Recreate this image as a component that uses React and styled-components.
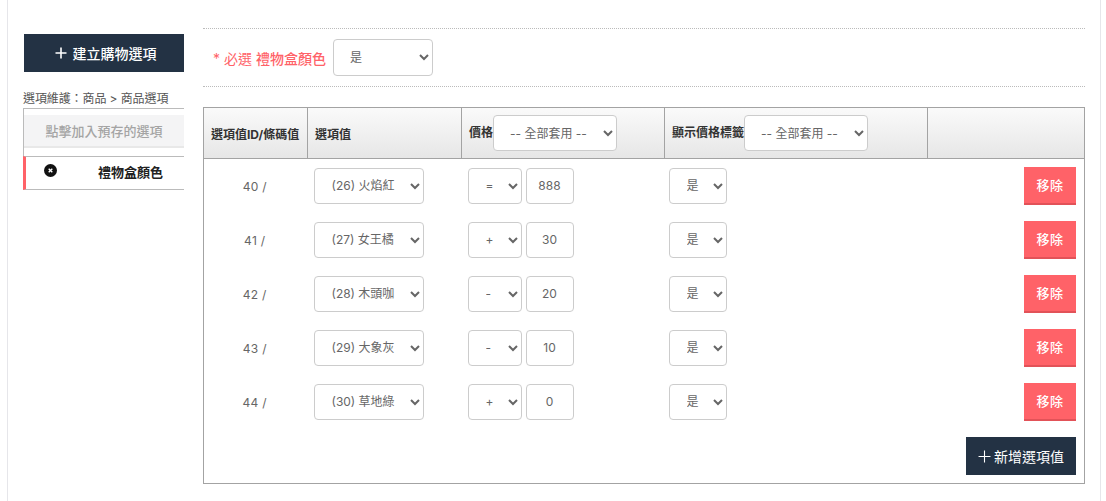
import React from "react";
import styled, { createGlobalStyle } from "styled-components";

const options = [
  { id: 40, value: "(26) 火焰紅", sign: "=", price: "888" },
  { id: 41, value: "(27) 女王橘", sign: "+", price: "30" },
  { id: 42, value: "(28) 木頭咖", sign: "-", price: "20" },
  { id: 43, value: "(29) 大象灰", sign: "-", price: "10" },
  { id: 44, value: "(30) 草地綠", sign: "+", price: "0" }
];

const GlobalStyle = createGlobalStyle`
  html, body {
    margin: 0;
    height: 501px;
    overflow: hidden;
    background: #fff;
    font-family: Inter, "Noto Sans CJK TC", sans-serif;
    color: #555;
  }
`;

const Panel = styled.div`
  box-sizing: border-box;
  width: 1094px;
  height: 501px;
  margin-left: 7px;
  padding: 28px 15px 0 16px;
  border-left: 1px solid #e6e6ea;
  border-right: 1px solid #e6e6ea;
  display: flex;
  gap: 19px;
`;

const Sidebar = styled.aside`
  width: 160px;
  flex: none;
  padding-top: 6px;
`;

const DarkButton = styled.button`
  box-sizing: border-box;
  border: 0;
  background: #233244;
  color: #fff;
  font: 500 14px Inter, "Noto Sans CJK TC", sans-serif;
  display: flex;
  align-items: center;
  justify-content: center;
  gap: 6px;
  height: 38px;
  padding: 0;
`;

const CreateButton = styled(DarkButton)`
  width: 160px;
  padding-left: 3px;
`;

const Crumb = styled.div`
  margin: 18px 0 0 -1px;
  height: 18px;
  line-height: 18px;
  font-size: 12px;
  letter-spacing: -0.1px;
  color: #555;
  white-space: nowrap;
`;

const OptionList = styled.div`
  box-sizing: border-box;
  width: 161px;
  height: 82px;
  margin-left: -1px;
  padding-top: 6px;
  border-top: 1px solid #bbb;
  border-left: 1px solid #bbb;
`;

const Preset = styled.div`
  box-sizing: border-box;
  height: 33px;
  line-height: 33px;
  background: #f4f4f5;
  border-bottom: 2px solid #e8e8e8;
  color: #a4a4a4;
  font-size: 13px;
  font-weight: 500;
  text-align: center;
`;

const PickedOption = styled.div`
  box-sizing: border-box;
  height: 34px;
  margin: 8px 0 0 -1px;
  border-top: 1px solid #bbb;
  border-bottom: 1px solid #bbb;
  border-left: 3px solid #ff6268;
  display: flex;
  padding: 7px 0 0 18px;
  color: #222;
  font-size: 13px;
  font-weight: 700;
`;

const PickedName = styled.span`
  margin: -1px 0 0 41px;
  line-height: 18px;
`;

const Main = styled.main`
  flex: 1;
  min-width: 0;
`;

const RequiredRow = styled.div`
  box-sizing: border-box;
  height: 59px;
  border-top: 1px dotted #bbb;
  border-bottom: 1px dotted #bbb;
  display: flex;
  align-items: center;
  gap: 7px;
  padding-left: 10px;
`;

const RequiredLabel = styled.label`
  color: #ff6268;
  font-size: 14px;
  font-weight: 400;
  white-space: nowrap;
`;

const Strong = styled.b`
  font-weight: 500;
`;

const Select = styled.select`
  box-sizing: border-box;
  flex: none;
  width: ${(p) => p.$w}px;
  height: ${(p) => p.$h || 36}px;
  padding: 0 0 0 ${(p) => p.$pad ?? 13}px;
  background-color: #fff;
  border: 1px solid #ccc;
  border-radius: 4px;
  color: #666;
  font: 400 12px Inter, "Noto Sans CJK TC", sans-serif;
`;

const Table = styled.table`
  box-sizing: border-box;
  margin-top: 20px;
  width: 882px;
  height: 377px;
  table-layout: fixed;
  border-collapse: collapse;
  border: 1px solid #a3a3a3;
`;

const HeadRow = styled.tr`
  height: 51px;
  background: linear-gradient(#fafafa, #e6e6e6);
`;

const Th = styled.th`
  box-sizing: border-box;
  width: ${(p) => p.$w}px;
  border: 1px solid #a3a3a3;
  padding: 0 ${(p) => p.$pad ?? 7}px;
  text-align: left;
  color: #333;
  font-size: 12px;
  font-weight: 700;
  white-space: nowrap;
  overflow: hidden;
`;

const ThInner = styled.div`
  display: flex;
  align-items: center;
`;

const ThLabel = styled.span`
  position: relative;
  top: -2px;
`;

const Row = styled.tr`
  height: 54px;
`;

const Td = styled.td`
  padding: 0 ${(p) => p.$pad ?? 6}px;
  vertical-align: middle;
  font-size: 12px;
  color: #666;
  text-align: ${(p) => p.$align || "left"};
`;

const IdCell = styled(Td)`
  padding: 2px 8px 0 6px;
  letter-spacing: 0.3px;
`;

const PriceCell = styled.div`
  display: flex;
  align-items: center;
  gap: 4px;
`;

const PriceInput = styled.input`
  box-sizing: border-box;
  width: 48px;
  height: 36px;
  border: 1px solid #ccc;
  border-radius: 4px;
  text-align: center;
  color: #666;
  font: 400 12px Inter, "Noto Sans CJK TC", sans-serif;
  padding: 0;
`;

const RemoveButton = styled.button`
  box-sizing: border-box;
  width: 52px;
  height: 38px;
  border: 0;
  border-bottom: 2px solid #e25258;
  background: #ff6268;
  color: #fff;
  font: 500 13px Inter, "Noto Sans CJK TC", sans-serif;
  letter-spacing: 0.5px;
  padding: 0;
`;

const AddButton = styled(DarkButton)`
  width: 110px;
  margin-left: auto;
  gap: 3px;
  font-weight: 400;
`;

const FooterCell = styled.td`
  padding: 0 8px 8px 0;
  vertical-align: bottom;
`;

const PlusIcon = ({ size = 12, weight = 1.6 }) => (
  <svg width={size} height={size} viewBox="0 0 12 12" aria-hidden="true">
    <path d="M6 0.5v11M0.5 6h11" stroke="currentColor" strokeWidth={weight} fill="none" />
  </svg>
);

const RemoveIcon = () => (
  <svg width="13" height="13" viewBox="0 0 13 13" aria-hidden="true">
    <circle cx="6.5" cy="6.5" r="6.5" fill="#111" />
    <path d="M4.7 4.7l3.6 3.6M8.3 4.7l-3.6 3.6" stroke="#fff" strokeWidth="1.4" />
  </svg>
);

export default function App() {
  return (
    <>
      <GlobalStyle />
      <Panel>
        <Sidebar>
          <CreateButton>
            <PlusIcon />
            建立購物選項
          </CreateButton>
          <Crumb>選項維護：商品 &gt; 商品選項</Crumb>
          <OptionList>
            <Preset>點擊加入預存的選項</Preset>
            <PickedOption>
              <RemoveIcon />
              <PickedName>禮物盒顏色</PickedName>
            </PickedOption>
          </OptionList>
        </Sidebar>
        <Main>
          <RequiredRow>
            <RequiredLabel>
              * 必選 <Strong>禮物盒顏色</Strong>
            </RequiredLabel>
            <Select $w={100} $h={37} $pad={12} defaultValue="是">
              <option>是</option>
              <option>否</option>
            </Select>
          </RequiredRow>
          <Table>
            <thead>
              <HeadRow>
                <Th $w={104}>選項值ID/條碼值</Th>
                <Th $w={154}>選項值</Th>
                <Th $w={203}>
                  <ThInner>
                    <ThLabel>價格</ThLabel>
                    <Select $w={124} $pad={12}>
                      <option>-- 全部套用 --</option>
                    </Select>
                  </ThInner>
                </Th>
                <Th $w={263}>
                  <ThInner>
                    <ThLabel>顯示價格標籤</ThLabel>
                    <Select $w={124} $pad={12}>
                      <option>-- 全部套用 --</option>
                    </Select>
                  </ThInner>
                </Th>
                <Th />
              </HeadRow>
            </thead>
            <tbody>
              {options.map((o) => (
                <Row key={o.id}>
                  <IdCell $align="center">{o.id} /</IdCell>
                  <Td>
                    <Select $w={110} defaultValue={o.value}>
                      <option>{o.value}</option>
                    </Select>
                  </Td>
                  <Td>
                    <PriceCell>
                      <Select $w={54} defaultValue={o.sign}>
                        <option>=</option>
                        <option>+</option>
                        <option>-</option>
                      </Select>
                      <PriceInput defaultValue={o.price} />
                    </PriceCell>
                  </Td>
                  <Td $pad={4}>
                    <Select $w={58} defaultValue="是">
                      <option>是</option>
                      <option>否</option>
                    </Select>
                  </Td>
                  <Td $align="right" $pad={8}>
                    <RemoveButton>移除</RemoveButton>
                  </Td>
                </Row>
              ))}
              <tr>
                <FooterCell colSpan={5}>
                  <AddButton>
                    <PlusIcon size={13} weight={1} />
                    新增選項值
                  </AddButton>
                </FooterCell>
              </tr>
            </tbody>
          </Table>
        </Main>
      </Panel>
    </>
  );
}
